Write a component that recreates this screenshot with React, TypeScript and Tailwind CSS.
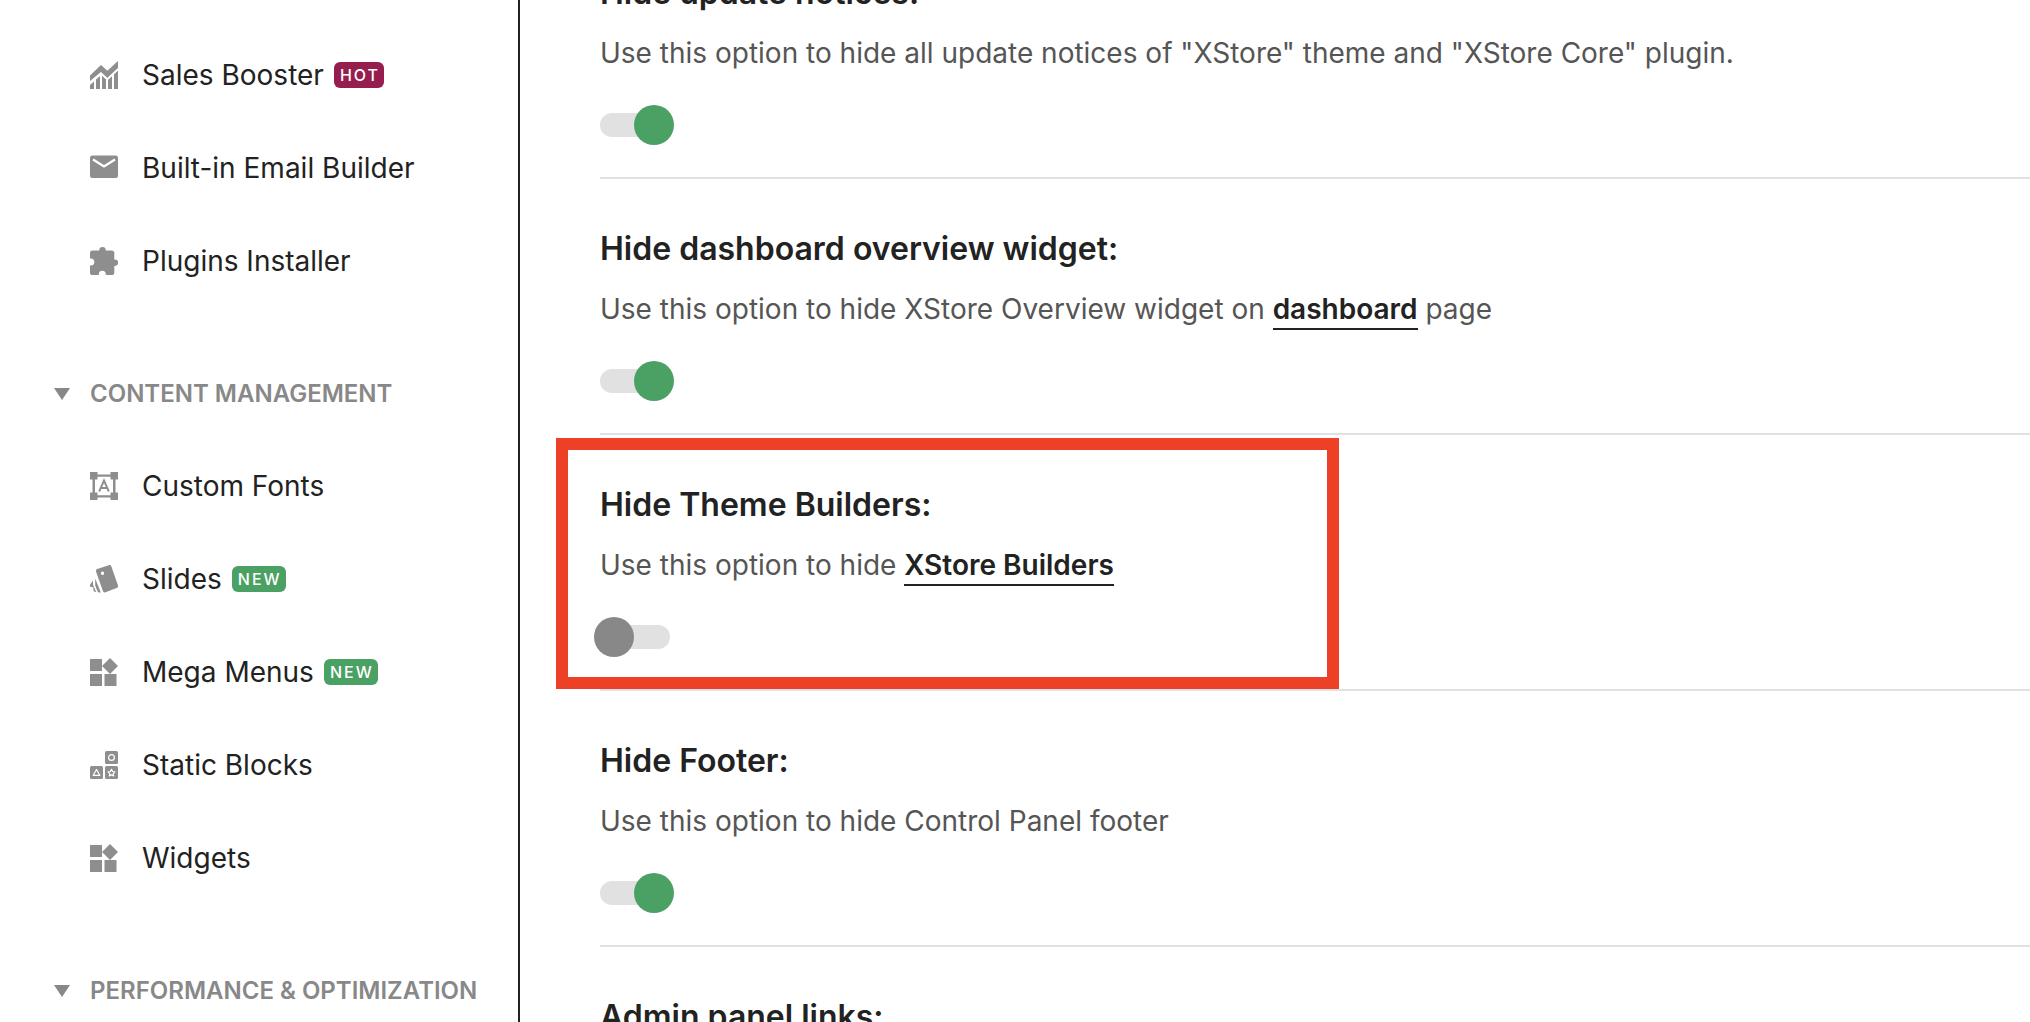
import React, { useState } from "react";

const IconFrame = ({ children }: { children: React.ReactNode }) => (
  <svg viewBox="0 0 28 28" className="size-7 shrink-0" fill="#8e8e8e" aria-hidden="true">
    {children}
  </svg>
);

const SalesIcon = () => (
  <IconFrame>
    <path d="M0 14.500 11 4 17.300 9.800 28 0v7L17.300 17 11 11 0 20z" />
    <path d="M0 24l4-3.500V28H0zM6 18.500l4-3.500V28H6zM12 14.500l4 3.800V28h-4zM18 18.500l4-3.700V28h-4zM24 13l4-3.700V28h-4z" />
    <path d="M0 21.800 10.900 12.400 17.300 18.400 28 8.400" fill="none" stroke="#fff" strokeWidth="1.500" />
  </IconFrame>
);

const MailIcon = () => (
  <IconFrame>
    <rect y="1.500" width="28" height="22.500" rx="2.200" />
    <path d="M3 5.500l11 7L25 5.500" fill="none" stroke="#fff" strokeWidth="2.200" />
  </IconFrame>
);

const PuzzleIcon = () => (
  <IconFrame>
    <path d="M25 12.5h-.7V6a2.6 2.6 0 0 0-2.6-2.6h-6V3.200a3.200 3.200 0 0 0-6.400 0v.2H2.600A2.600 2.600 0 0 0 0 6v5.600h.8a3.500 3.500 0 0 1 0 7H0v6.800A2.600 2.600 0 0 0 2.600 28h6.200v-.8a3.500 3.500 0 0 1 7 0v.8h5.900a2.600 2.600 0 0 0 2.600-2.600v-6.500h.7a3.200 3.200 0 0 0 0-6.400z" />
  </IconFrame>
);

const FontsIcon = () => (
  <IconFrame>
    <path d="M0 0h7.500v2.500h13V0H28v7.500h-2.500v13H28V28h-7.500v-2.500h-13V28H0v-7.500h2.500v-13H0zM7.500 4.800v2.700H5v13h2.500v2.700h13v-2.700H23v-13h-2.500V4.800z" fillRule="evenodd" />
    <path d="M9.200 19.500 14 8.500l4.800 11M11 16h6" fill="none" stroke="#8e8e8e" strokeWidth="1.900" />
  </IconFrame>
);

const SlidesIcon = () => (
  <IconFrame>
    <path d="M7.200 4 18.800.2a2 2 0 0 1 2.600 1.300L28 20.500a2 2 0 0 1-1.300 2.500l-11.200 4.300a2 2 0 0 1-2.600-1.200L6 6.500A2 2 0 0 1 7.200 4zM12.500 6.600a1.700 1.700 0 1 0 0 3.400 1.700 1.700 0 0 0 0-3.400z" fillRule="evenodd" />
    <path d="M5.200 13.500 10.800 27.500H9.500a2 2 0 0 1-2-1.300L5.200 20.500zM3 15.500v6.800L.8 22a1.500 1.500 0 0 1-.8-2.200zM3 19.500 6.300 27.200 4.300 26.600a1.500 1.500 0 0 1-.8-1z" />
  </IconFrame>
);

const GridIcon = () => (
  <IconFrame>
    <path d="M0 1h12v12H0zM0 16h12v12H0zM14.500 16h12v12h-12zM20 0l8 8-8 8-8-8z" />
  </IconFrame>
);

const BlocksIcon = () => (
  <IconFrame>
    <rect x="15" width="13" height="13" rx="1.500" />
    <rect y="15" width="13" height="13" rx="1.500" />
    <rect x="15" y="15" width="13" height="13" rx="1.500" />
    <g fill="none" stroke="#fff" strokeWidth="1.200" strokeLinejoin="round">
      <circle cx="21.500" cy="6.500" r="2.900" />
      <path d="M6.500 18.500 9.800 24.300H3.200zM21.500 18.400l1.100 2.100 2.300.4-1.600 1.700.3 2.300-2.100-1-2.100 1 .3-2.300-1.600-1.700 2.300-.4z" />
    </g>
  </IconFrame>
);

const Badge = ({ text }: { text: string }) => (
  <span
    className={`flex h-[26px] items-center rounded-md pr-1 pl-1.5 text-base font-medium tracking-[2px] text-white ${
      text === "HOT" ? "bg-[#951e4f]" : "bg-[#4ba064]"
    }`}
  >
    {text}
  </span>
);

type Item = { label: string; Icon: () => React.JSX.Element; badge?: string };

const NavList = ({ items }: { items: Item[] }) => (
  <ul>
    {items.map(({ label, Icon, badge }) => (
      <li key={label}>
        <a href="#" className="flex h-[93px] items-center pl-[90px] text-[28px] whitespace-nowrap text-[#222]">
          <Icon />
          <span className="ml-6">{label}</span>
          {badge && (
            <span className="ml-2.5">
              <Badge text={badge} />
            </span>
          )}
        </a>
      </li>
    ))}
  </ul>
);

const NavHeading = ({ children }: { children: React.ReactNode }) => (
  <h2 className="flex">
    <button
      type="button"
      className="flex h-[93px] items-center gap-5 pt-0.5 pl-[54px] text-2xl font-semibold whitespace-nowrap text-[#888]"
    >
      <svg viewBox="0 0 16 12" className="h-3 w-4 shrink-0" fill="#888" aria-hidden="true">
        <path d="M0 0h16L8 12z" />
      </svg>
      <span>{children}</span>
    </button>
  </h2>
);

const Toggle = ({ label, initial }: { label: string; initial: boolean }) => {
  const [on, setOn] = useState(initial);
  return (
    <label className="relative flex h-10 w-[70px] cursor-pointer items-center">
      <input
        type="checkbox"
        role="switch"
        aria-label={label}
        checked={on}
        onChange={() => setOn(!on)}
        className="peer sr-only"
      />
      <span className="h-6 w-full rounded-full bg-[#e1e1e1]" />
      <span className="absolute top-0 -left-1.5 size-10 rounded-full bg-[#888] peer-checked:left-[34px] peer-checked:bg-[#4ba064]" />
    </label>
  );
};

const OptionTitle = ({ children }: { children: string }) => (
  <h3 className="text-[32px] leading-10 font-semibold whitespace-nowrap text-[#222]">{children}</h3>
);

const Option = ({
  title,
  on = true,
  highlighted = false,
  children,
}: {
  title: string;
  on?: boolean;
  highlighted?: boolean;
  children: React.ReactNode;
}) => (
  <section className="relative border-b-2 border-[#e1e1e1] pt-[50px] pb-8">
    <OptionTitle>{title}</OptionTitle>
    <p className="mt-5 text-[28px] leading-10 whitespace-nowrap text-[#555]">{children}</p>
    <div className="mt-8">
      <Toggle label={title} initial={on} />
    </div>
    {highlighted && (
      <div className="pointer-events-none absolute top-[3px] -left-11 h-[251px] w-[783px] border-12 border-[#ec4027]" />
    )}
  </section>
);

const TextLink = ({ children }: { children: string }) => (
  <a href="#" className="border-b-2 border-[#222] pb-0.5 font-semibold text-[#222]">
    {children}
  </a>
);

export default function App() {
  return (
    <div className="flex h-screen overflow-hidden bg-white font-['Inter',sans-serif]">
      <nav className="w-[520px] shrink-0 border-r-2 border-[#222] pt-7">
        <NavList
          items={[
            { label: "Sales Booster", Icon: SalesIcon, badge: "HOT" },
            { label: "Built-in Email Builder", Icon: MailIcon },
            { label: "Plugins Installer", Icon: PuzzleIcon },
          ]}
        />
        <div className="mt-[39px]">
          <NavHeading>CONTENT MANAGEMENT</NavHeading>
        </div>
        <NavList
          items={[
            { label: "Custom Fonts", Icon: FontsIcon },
            { label: "Slides", Icon: SlidesIcon, badge: "NEW" },
            { label: "Mega Menus", Icon: GridIcon, badge: "NEW" },
            { label: "Static Blocks", Icon: BlocksIcon },
            { label: "Widgets", Icon: GridIcon },
          ]}
        />
        <div className="mt-[39px]">
          <NavHeading>PERFORMANCE &amp; OPTIMIZATION</NavHeading>
        </div>
      </nav>
      <main className="min-w-0 flex-1 overflow-hidden pl-20">
        <div className="-mt-[77px]">
          <Option title="Hide update notices:">
            Use this option to hide all update notices of "XStore" theme and "XStore Core" plugin.
          </Option>
          <Option title="Hide dashboard overview widget:">
            Use this option to hide XStore Overview widget on <TextLink>dashboard</TextLink> page
          </Option>
          <Option title="Hide Theme Builders:" on={false} highlighted>
            Use this option to hide <TextLink>XStore Builders</TextLink>
          </Option>
          <Option title="Hide Footer:">Use this option to hide Control Panel footer</Option>
          <section className="pt-[50px]">
            <OptionTitle>Admin panel links:</OptionTitle>
          </section>
        </div>
      </main>
    </div>
  );
}
